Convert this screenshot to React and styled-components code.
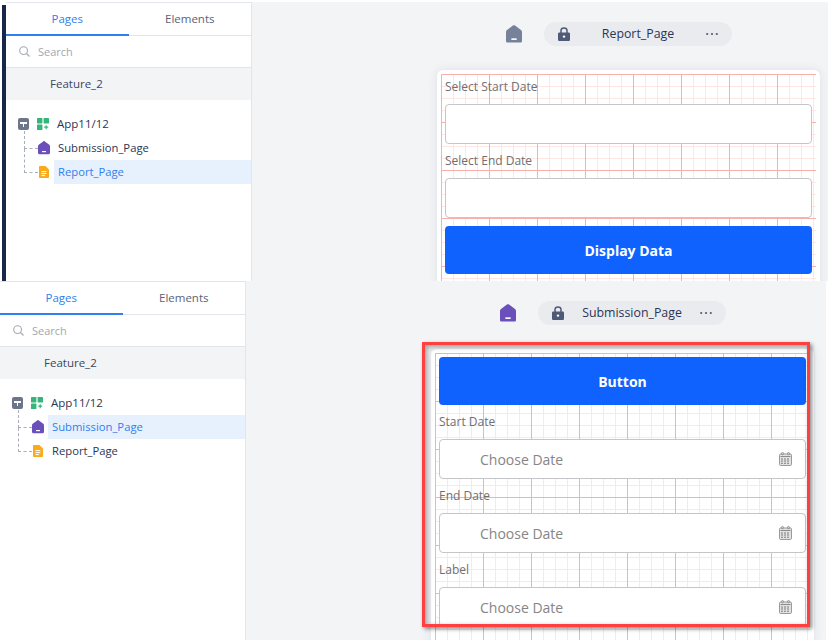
import React from "react";
import styled, { createGlobalStyle } from "styled-components";

const Global = createGlobalStyle`
  html, body { margin: 0; padding: 0; background: #fff; }
  body { width: 830px; height: 640px; overflow: hidden; font-family: "Open Sans", "Noto Sans", sans-serif; }
  * { box-sizing: border-box; }
`;

const Page = styled.div`
  width: 830px;
  height: 640px;
  overflow: hidden;
  display: flex;
  flex-direction: column;
`;
const Shot = styled.section`
  flex: none;
  display: flex;
  width: 826px;
  height: ${(p) => p.$height}px;
  margin-left: ${(p) => p.$indent}px;
  margin-top: ${(p) => p.$top}px;
  overflow: hidden;
`;
const Strip = styled.div`
  flex: none;
  width: 4px;
  margin-top: 3px;
  background: #17274a;
`;
const Sidebar = styled.aside`
  flex: none;
  width: 246px;
  background: #fff;
  border-top: 1px solid #e3e5ea;
  border-right: 1px solid #e3e5ea;
`;
const Tabs = styled.div`
  display: flex;
  height: 33px;
  border-bottom: 1px solid #e3e5ea;
`;
const Tab = styled.div`
  flex: 1;
  height: 33px;
  display: flex;
  align-items: center;
  justify-content: center;
  font-size: 11.5px;
  color: ${(p) => (p.$active ? "#2f80ed" : "#596379")};
  border-bottom: 2px solid ${(p) => (p.$active ? "#2f80ed" : "transparent")};
`;
const SearchRow = styled.div`
  height: 32px;
  display: flex;
  align-items: center;
  gap: 8px;
  padding-left: 13px;
  border-bottom: 1px solid #e3e5ea;
  font-size: 11px;
  color: #a3a8b3;
`;
const Feature = styled.div`
  height: 32px;
  display: flex;
  align-items: center;
  padding: 0 0 2px 44px;
  background: #f3f4f6;
  font-size: 11.5px;
  color: #3c4660;
`;
const Tree = styled.div`
  padding-top: 12px;
`;
const RootRow = styled.div`
  height: 24px;
  display: flex;
  align-items: center;
  padding-left: 12px;
  font-size: 11.5px;
  color: #2b3554;
`;
const Toggle = styled.span`
  position: relative;
  flex: none;
  width: 11px;
  height: 12px;
  margin-right: 8px;
  border-radius: 2px;
  background: #6c758a;
  display: flex;
  justify-content: center;
  &::before {
    content: "";
    margin-top: 4px;
    width: 7px;
    height: 2px;
    background: #fff;
  }
  &::after {
    content: "";
    position: absolute;
    top: 6px;
    left: 5px;
    width: 1px;
    height: 3px;
    background: #fff;
  }
`;
const RootName = styled.span`
  margin-left: 8px;
  padding-bottom: 2px;
`;
const ChildRow = styled.div`
  height: 24px;
  display: flex;
  align-items: center;
  padding-left: 18px;
  font-size: 11.25px;
  color: #2b3554;
`;
const Connector = styled.span`
  position: relative;
  flex: none;
  width: 14px;
  border-top: 1px dashed #a9aeb9;
  &::before {
    content: "";
    position: absolute;
    left: 0;
    bottom: 0;
    height: ${(p) => p.$rise}px;
    border-left: 1px dashed #a9aeb9;
  }
`;
const PageName = styled.span`
  flex: 1;
  height: 24px;
  margin-left: 4px;
  padding: 0 0 2px 4px;
  display: flex;
  align-items: center;
  background: ${(p) => (p.$active ? "#e7f0fd" : "transparent")};
  color: ${(p) => (p.$active ? "#2f80ed" : "#2b3554")};
`;
const Canvas = styled.main`
  position: relative;
  flex: 1;
  min-width: 0;
  padding: 20px 0 0 185px;
  background: #f3f4f6;
`;
const Toolbar = styled.div`
  display: flex;
  align-items: center;
  height: 24px;
  margin-left: 69px;
`;
const PagePill = styled.div`
  width: 188px;
  height: 24px;
  margin-left: 22px;
  padding: 0 14px;
  display: flex;
  align-items: center;
  justify-content: space-between;
  border-radius: 12px;
  background: #e9ebef;
  font-size: 12.35px;
  color: #2b3554;
`;
const PillTitle = styled.span`
  padding-bottom: 2px;
`;
const Card = styled.div`
  position: relative;
  width: 383px;
  margin-top: 24px;
  padding: 4px;
  border-radius: 6px;
  background: #fff;
  box-shadow: 0 0 10px rgba(40, 50, 70, 0.1);
`;
const GridSheet = styled.div`
  min-height: 420px;
  padding: 4px;
  display: flex;
  flex-direction: column;
  gap: 8px;
  background-color: #fff;
  background-image:
    linear-gradient(to right, #f9b0ab 1px, transparent 1px),
    linear-gradient(to bottom, #f9b0ab 1px, transparent 1px),
    linear-gradient(to right, #fee6e3 1px, transparent 1px),
    linear-gradient(to bottom, #fee6e3 1px, transparent 1px);
  background-size: 48px 48px, 48px 48px, 12px 12px, 12px 12px;
`;
const PrimaryButton = styled.div`
  height: 48px;
  display: flex;
  align-items: center;
  justify-content: center;
  border-radius: 4px;
  background: #0f62fe;
  color: #fff;
  font-size: 14px;
  font-weight: 700;
`;
const Field = styled.div`
  display: flex;
  flex-direction: column;
  gap: 8px;
`;
const FieldLabel = styled.div`
  height: 18px;
  line-height: 18px;
  font-size: 12px;
  color: #6f6f6f;
`;
const DateBox = styled.div`
  height: 40px;
  padding: 0 13px 0 40px;
  display: flex;
  align-items: center;
  justify-content: space-between;
  border: 1px solid #c4c6ca;
  border-radius: 4px;
  background: #fff;
  font-size: 14px;
  color: #858585;
`;
const Callout = styled.div`
  position: absolute;
  left: -9px;
  top: -7px;
  width: 388px;
  height: 285px;
  border: 3px solid #ff4040;
  box-shadow: 2px 2px 4px rgba(0, 0, 0, 0.45), inset 2px 2px 5px rgba(0, 0, 0, 0.35);
  pointer-events: none;
`;

const SearchIcon = () => (
  <svg width="11" height="11" viewBox="0 0 11 11" fill="none" stroke="#a3a8b3" strokeWidth="1.1">
    <circle cx="4.6" cy="4.6" r="3.9" />
    <path d="M7.5 7.5L10.5 10.5" />
  </svg>
);
const AppIcon = () => (
  <svg width="12" height="12" viewBox="0 0 12 12" style={{ flex: "none" }}>
    <rect width="5.4" height="5.4" rx="0.6" fill="#35b47c" />
    <rect x="6.6" width="5.4" height="5.4" rx="0.6" fill="#35b47c" />
    <rect y="6.6" width="5.4" height="5.4" rx="0.6" fill="#35b47c" />
    <path d="M9.2 7.2v4M7.2 9.2h4" stroke="#35b47c" strokeWidth="1.2" />
  </svg>
);
const HomeIcon = ({ color, size = 12 }) => (
  <svg width={size} height={size * 1.1} viewBox="0 0 12 13.2" style={{ flex: "none" }}>
    <path d="M5.2.4C5.7 0 6.3 0 6.8.4L11 3.6C11.7 4.1 12 4.6 12 5.4V12C12 12.7 11.5 13.2 10.8 13.2H1.2C.5 13.2 0 12.7 0 12V5.4C0 4.6.3 4.1 1 3.6Z" fill={color} />
    <rect x="4" y="10" width="4" height="1.2" fill="#fff" />
  </svg>
);
const DocIcon = () => (
  <svg width="10" height="12" viewBox="0 0 10 12" style={{ flex: "none", marginLeft: 1, marginRight: 1 }}>
    <path d="M1 0H6.4L10 3.6V11C10 11.6 9.6 12 9 12H1C.4 12 0 11.6 0 11V1C0 .4.4 0 1 0Z" fill="#fbab18" />
    <path d="M2.4 5.6H7.4M2.4 7.6H7.4M2.4 9.6H6" stroke="#fff" strokeWidth="1" />
  </svg>
);
const LockIcon = () => (
  <svg width="12" height="14" viewBox="0 0 12 14" style={{ flex: "none" }}>
    <path d="M3 6V3.6C3 2 4.3 1 6 1S9 2 9 3.6V6" fill="none" stroke="#4f5b76" strokeWidth="1.5" />
    <rect y="5.4" width="12" height="8.6" rx="1.2" fill="#4f5b76" />
    <circle cx="6" cy="9.6" r="1.2" fill="#fff" />
  </svg>
);
const DotsIcon = () => (
  <svg width="12" height="4" viewBox="0 0 12 4" style={{ flex: "none" }}>
    <circle cx="1.2" cy="2" r="1.1" fill="#4f5b76" />
    <circle cx="6" cy="2" r="1.1" fill="#4f5b76" />
    <circle cx="10.8" cy="2" r="1.1" fill="#4f5b76" />
  </svg>
);
const CalendarIcon = () => (
  <svg width="13" height="14" viewBox="0 0 13 14" style={{ flex: "none" }}>
    <rect x="0.5" y="2" width="12" height="11.5" rx="1.2" fill="#e2e2e2" stroke="#9a9a9a" />
    <circle cx="3.5" cy="1.6" r="1.1" fill="none" stroke="#8c8c8c" strokeWidth="0.9" />
    <circle cx="9.5" cy="1.6" r="1.1" fill="none" stroke="#8c8c8c" strokeWidth="0.9" />
    <path d="M1.5 4.5H11.5" stroke="#8c8c8c" />
    <path d="M2 7H11M2 9H11M2 11.2H11" stroke="#7d7d7d" strokeWidth="1.1" strokeDasharray="2 1" />
  </svg>
);

const SideTree = ({ active }) => (
  <Sidebar>
    <Tabs>
      <Tab $active>Pages</Tab>
      <Tab>Elements</Tab>
    </Tabs>
    <SearchRow>
      <SearchIcon />
      Search
    </SearchRow>
    <Feature>Feature_2</Feature>
    <Tree>
      <RootRow>
        <Toggle />
        <AppIcon />
        <RootName>App11/12</RootName>
      </RootRow>
      <ChildRow>
        <Connector $rise={18} />
        <HomeIcon color="#6b4fbb" />
        <PageName $active={active === "Submission_Page"}>Submission_Page</PageName>
      </ChildRow>
      <ChildRow>
        <Connector $rise={24} />
        <DocIcon />
        <PageName $active={active === "Report_Page"}>Report_Page</PageName>
      </ChildRow>
    </Tree>
  </Sidebar>
);

const Header = ({ name, color }) => (
  <Toolbar>
    <HomeIcon color={color} size={16} />
    <PagePill>
      <LockIcon />
      <PillTitle>{name}</PillTitle>
      <DotsIcon />
    </PagePill>
  </Toolbar>
);

const DateField = ({ label, placeholder }) => (
  <Field>
    <FieldLabel>{label}</FieldLabel>
    <DateBox>
      {placeholder}
      {placeholder && <CalendarIcon />}
    </DateBox>
  </Field>
);

export default function App() {
  return (
    <Page>
      <Global />
      <Shot $height={279} $indent={2} $top={2}>
        <Strip />
        <SideTree active="Report_Page" />
        <Canvas>
          <Header name="Report_Page" color="#76829a" />
          <Card>
            <GridSheet>
              <DateField label="Select Start Date" />
              <DateField label="Select End Date" />
              <PrimaryButton>Display Data</PrimaryButton>
            </GridSheet>
          </Card>
        </Canvas>
      </Shot>
      <Shot $height={359} $indent={0} $top={0}>
        <SideTree active="Submission_Page" />
        <Canvas>
          <Header name="Submission_Page" color="#6b4fbb" />
          <Card>
            <GridSheet>
              <PrimaryButton>Button</PrimaryButton>
              <DateField label="Start Date" placeholder="Choose Date" />
              <DateField label="End Date" placeholder="Choose Date" />
              <DateField label="Label" placeholder="Choose Date" />
            </GridSheet>
            <Callout />
          </Card>
        </Canvas>
      </Shot>
    </Page>
  );
}
